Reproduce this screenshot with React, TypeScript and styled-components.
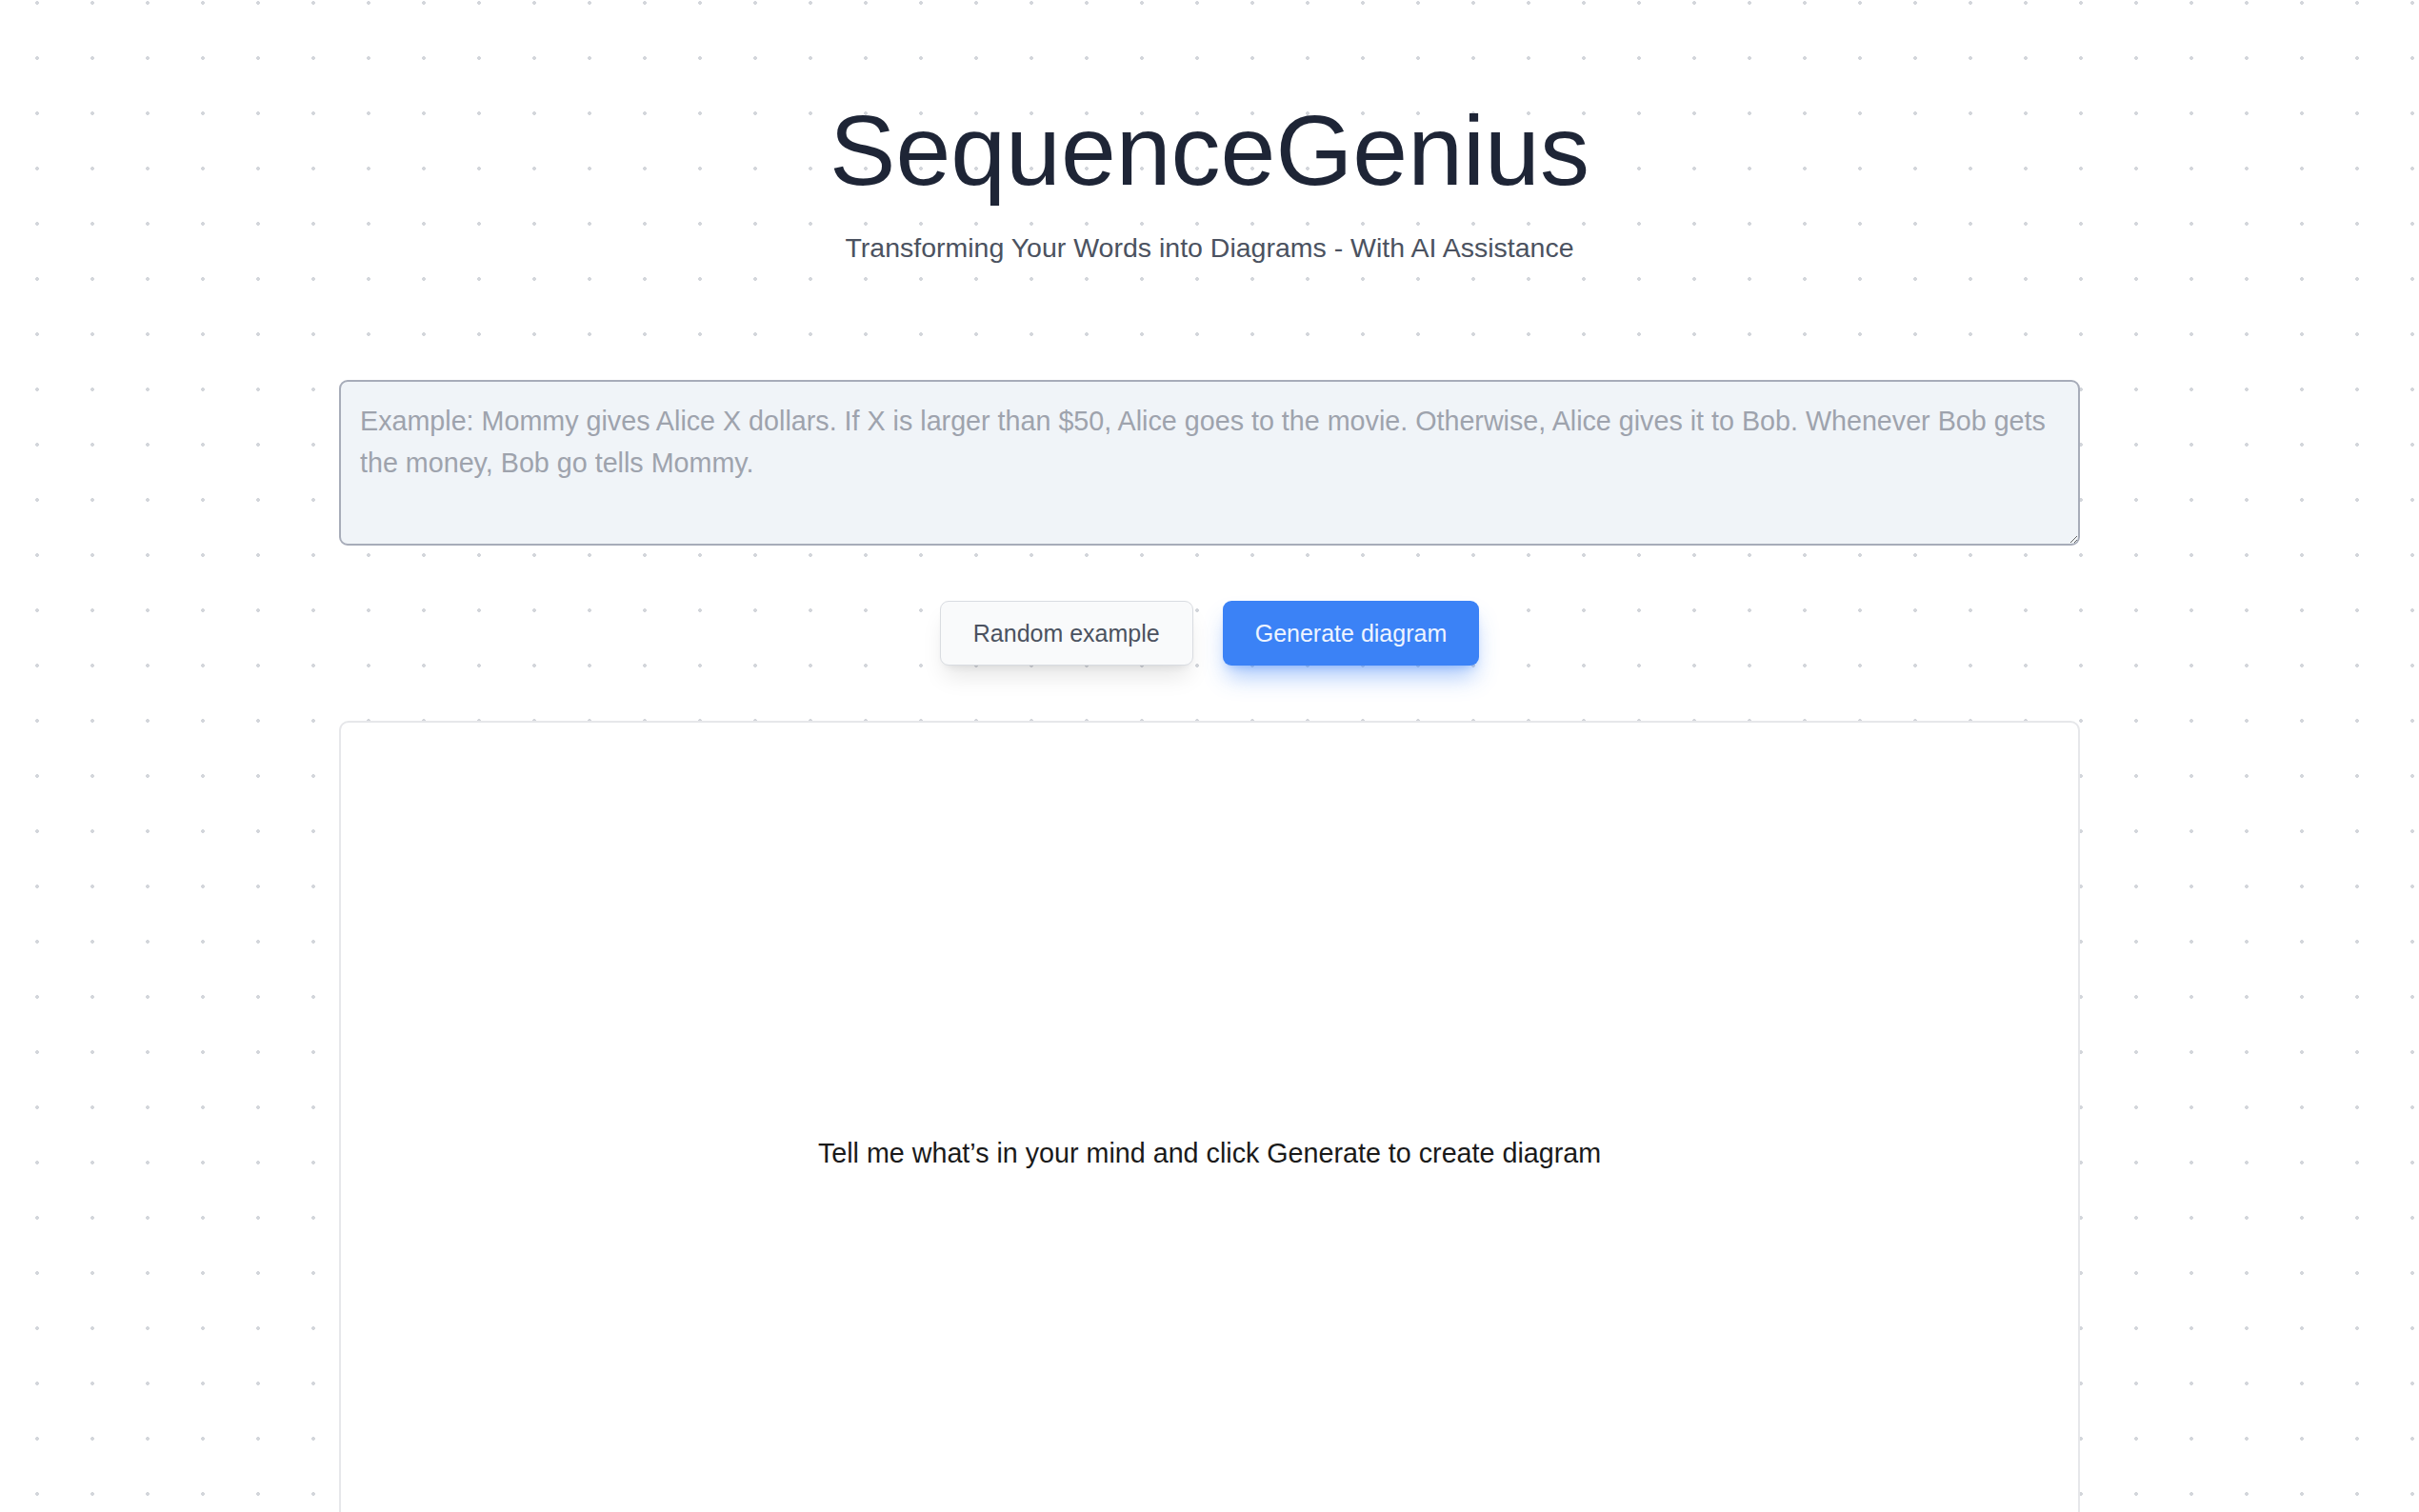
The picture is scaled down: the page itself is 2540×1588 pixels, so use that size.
import React, { useState } from "react";
import styled, { createGlobalStyle } from "styled-components";

const GlobalStyle = createGlobalStyle`
  html, body {
    margin: 0;
    padding: 0;
  }
  body {
    font-family: "Liberation Sans", Arial, sans-serif;
    background-color: #ffffff;
    background-image: radial-gradient(circle, #d3d6db 1.6px, transparent 2.2px);
    background-size: 58px 58px;
    background-position: 10px 32px;
  }
  * {
    box-sizing: border-box;
  }
`;

const Page = styled.main`
  display: flex;
  flex-direction: column;
  align-items: center;
  padding-top: 96px;
`;

const Title = styled.h1`
  margin: 0;
  font-size: 104px;
  line-height: 125px;
  font-weight: 400;
  color: #1e2536;
`;

const Subtitle = styled.p`
  margin: 18px 0 0;
  font-size: 28.5px;
  line-height: 42px;
  color: #4b5260;
`;

const Prompt = styled.textarea`
  display: block;
  width: 1828px;
  height: 174px;
  margin-top: 118px;
  padding: 19px 20px;
  font-family: "Liberation Sans", Arial, sans-serif;
  font-size: 28.7px;
  line-height: 44px;
  color: #1f2937;
  background: #f0f4f8;
  border: 2px solid #a7acb9;
  border-radius: 9px;
  outline: none;

  &::placeholder {
    color: #9ea3ad;
  }
`;

const ButtonRow = styled.div`
  display: flex;
  gap: 31px;
  margin-top: 58px;
`;

const Button = styled.button<{ $primary?: boolean }>`
  height: 68px;
  padding: 0 34px;
  font-family: "Liberation Sans", Arial, sans-serif;
  font-size: 25px;
  border-radius: 9px;
  cursor: pointer;
  border: ${(p) => (p.$primary ? "none" : "1.5px solid #d9dce1")};
  background: ${(p) => (p.$primary ? "#3b82f6" : "#f9fafb")};
  color: ${(p) => (p.$primary ? "#eef4ff" : "#4b5260")};
  box-shadow: ${(p) =>
    p.$primary
      ? "0 16px 24px -5px rgba(59, 130, 246, 0.45), 0 6px 10px -6px rgba(59, 130, 246, 0.45)"
      : "0 16px 24px -5px rgba(0, 0, 0, 0.1), 0 6px 10px -6px rgba(0, 0, 0, 0.1)"};
`;

const Canvas = styled.section`
  display: flex;
  align-items: center;
  justify-content: center;
  width: 1828px;
  height: 908px;
  margin-top: 58px;
  background: #ffffff;
  border: 2px solid #e6e7ea;
  border-radius: 10px;
`;

const Hint = styled.p`
  margin: 0;
  font-size: 28.7px;
  color: #1a1a1a;
`;

const EXAMPLES = [
  "Mommy gives Alice X dollars. If X is larger than $50, Alice goes to the movie. Otherwise, Alice gives it to Bob. Whenever Bob gets the money, Bob go tells Mommy.",
  "User logs in. Server checks the password. If it matches, the server returns a token, otherwise it shows an error.",
];

export default function App() {
  const [text, setText] = useState("");

  return (
    <>
      <GlobalStyle />
      <Page>
        <Title>SequenceGenius</Title>
        <Subtitle>Transforming Your Words into Diagrams - With AI Assistance</Subtitle>
        <Prompt
          rows={3}
          value={text}
          onChange={(e) => setText(e.currentTarget.value)}
          placeholder={"Example: " + EXAMPLES[0]}
        />
        <ButtonRow>
          <Button
            onClick={() =>
              setText(EXAMPLES[Math.floor(Math.random() * EXAMPLES.length)])
            }
          >
            Random example
          </Button>
          <Button $primary>Generate diagram</Button>
        </ButtonRow>
        <Canvas>
          <Hint>Tell me what’s in your mind and click Generate to create diagram</Hint>
        </Canvas>
      </Page>
    </>
  );
}
